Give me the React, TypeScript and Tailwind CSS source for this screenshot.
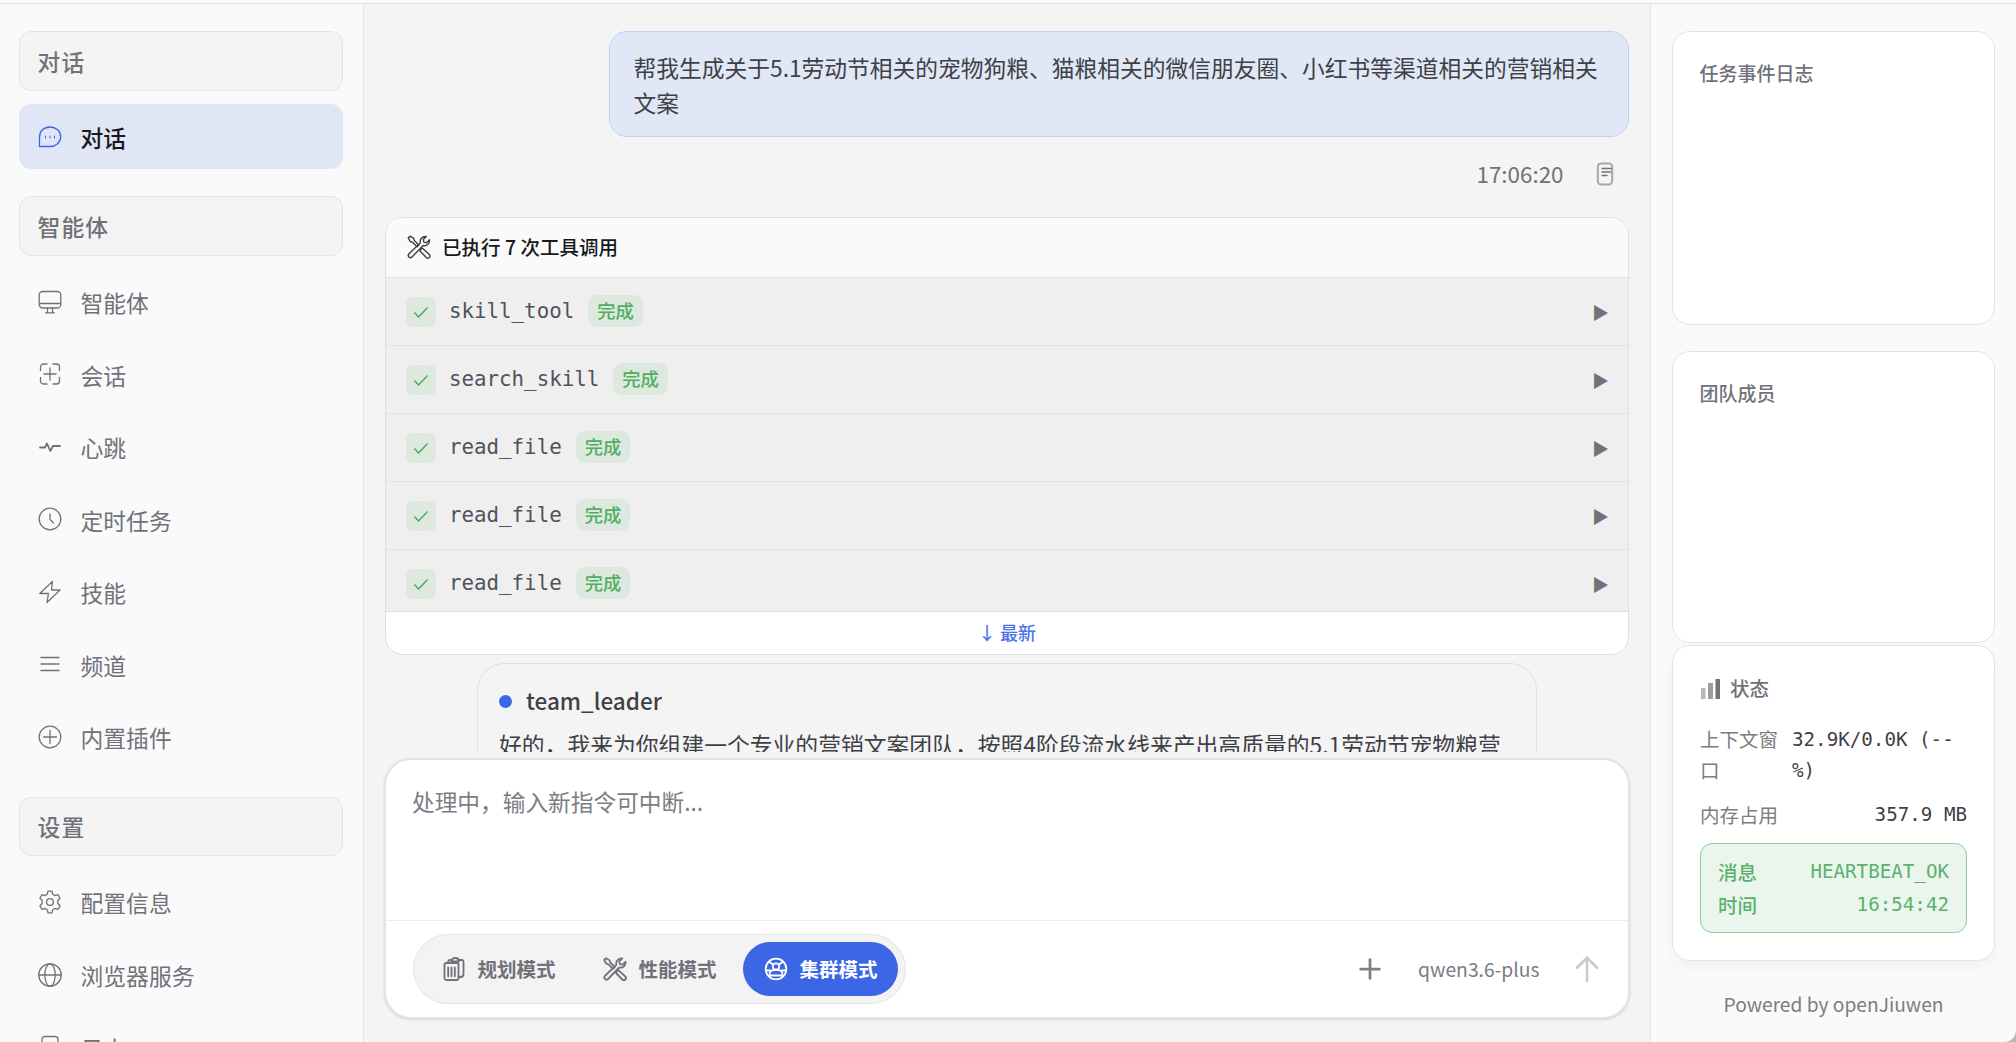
import type { ReactNode } from 'react';
import clsx from 'clsx';

type IconProps = { size?: number; width?: number; children: ReactNode; className?: string };

function Icon({ size = 24, width = 1.3, children, className }: IconProps) {
  return (
    <svg
      width={size}
      height={size}
      viewBox="0 0 24 24"
      fill="none"
      stroke="currentColor"
      strokeWidth={width}
      strokeLinecap="round"
      strokeLinejoin="round"
      className={clsx('shrink-0', className)}
    >
      {children}
    </svg>
  );
}

const icons: Record<string, ReactNode> = {
  chat: (
    <>
      <path d="M1.500 21.500V12C1.500 6 6 2 12 2s10.700 4.300 10.700 9.750S18 21.500 12 21.500z" />
      <path d="M7.500 11v2M12 11v2M16.500 11v2" strokeWidth={1} />
    </>
  ),
  agent: (
    <>
      <rect x="1.200" y="1.500" width="21.600" height="16.500" rx="3.500" />
      <path d="M1.500 13.500h21M9.500 18v4M14.500 18v4M7.500 22.800h9" />
    </>
  ),
  session: (
    <>
      <path d="M2.500 8.500V5a3 3 0 0 1 3-3H9M15 2h3.500a3 3 0 0 1 3 3v3.500M21.500 15.500V19a3 3 0 0 1-3 3H15M9 22H5.500a3 3 0 0 1-3-3v-3.500" />
      <path d="M12 6v12M6 12h12" />
    </>
  ),
  heart: <path d="M2 12.500h5L9 8.500l3.300 7.500 2.700-5h7" strokeWidth={1.8} />,
  clock: (
    <>
      <circle cx="12" cy="12" r="10.800" />
      <path d="M12 7v5.500l3.500 3.500" />
    </>
  ),
  bolt: <path d="M14.500 1.500 1.800 13.500h8.700L9 22.500l13-12.500h-8.500z" />,
  menu: <path d="M3 5.500h18M3 12h18M3 18.500h18" />,
  plugin: (
    <>
      <circle cx="12" cy="12" r="10.800" />
      <path d="M12 5.500v13M5.500 12h13" />
    </>
  ),
  gear: (
    <>
      <path d="M10 1.200h4l.8 3.100 2.200 1.300 3.100-.9 2 3.500-2.300 2.300v3l2.300 2.300-2 3.500-3.100-.9-2.200 1.300-.8 3.100h-4l-.8-3.100L7 18.400l-3.100.9-2-3.500 2.300-2.300v-3L1.900 8.200l2-3.500 3.100.9 2.200-1.300z" />
      <circle cx="12" cy="12" r="3.400" />
    </>
  ),
  globe: (
    <>
      <circle cx="12" cy="12" r="11.200" />
      <ellipse cx="12" cy="12" rx="5.200" ry="11.200" />
      <path d="M.8 12h22.400" />
    </>
  ),
  log: (
    <>
      <rect x="4" y="1.500" width="16" height="21" rx="3" />
      <path d="M8 8h8M8 12h8" />
    </>
  ),
  tools: (
    <>
      <path d="M3 1.200 1.200 3l2 3.500 2.300.8 4.500 4.500 1.800-1.800-4.500-4.500-.8-2.300z" />
      <path d="m14 14 1.500-.8 6.800 6.300a2.100 2.100 0 0 1-3 3L13 16z" />
      <path d="M16.200 10.500 5 22a2.200 2.200 0 0 1-3.200-3L13.400 7.800c-.8-3.200 1.600-6.800 5.800-6.300l-2.900 2.900.6 2.700 2.700.6 2.900-2.900c.6 4.200-3 6.500-6.300 5.700z" />
    </>
  ),
  plan: (
    <>
      <rect x="2.500" y="6" width="14" height="17" rx="1.800" />
      <path d="M6 6V5a2 2 0 0 1 2-2h2M16 3h3.500a2 2 0 0 1 2 2v12a3 3 0 0 1-3 3h-2" />
      <path d="M9.500 4.500C9.500 2.500 11 1 13.200 1S17 2.500 17 4.500z" />
      <path d="M6.200 10.500v8.800M9.500 10.500v8.800M12.800 10.500v8.800" />
    </>
  ),
  cluster: (
    <>
      <circle cx="12" cy="12" r="10.300" />
      <circle cx="12" cy="9.500" r="3.200" />
      <path d="M5.500 16.500c.8-2 2-3 3.800-3.500h5.400c1.800.5 3 1.500 3.800 3.500M2.500 13.500h5M16.500 13.500h5M5 18.500h14M6 5.500l3 2M18 5.500l-3 2" />
    </>
  ),
  copy: (
    <>
      <rect x="4.800" y="1.500" width="14.400" height="21" rx="3.500" strokeWidth={2} className="opacity-60" />
      <path d="M9 6.500h9.500M9 10h8.500M9 13.500h5" />
    </>
  ),
};

const groups = [
  { title: '对话', items: [{ icon: 'chat', label: '对话', active: true }] },
  {
    title: '智能体',
    items: [
      { icon: 'agent', label: '智能体' },
      { icon: 'session', label: '会话' },
      { icon: 'heart', label: '心跳' },
      { icon: 'clock', label: '定时任务' },
      { icon: 'bolt', label: '技能' },
      { icon: 'menu', label: '频道' },
      { icon: 'plugin', label: '内置插件' },
    ],
  },
  {
    title: '设置',
    items: [
      { icon: 'gear', label: '配置信息' },
      { icon: 'globe', label: '浏览器服务' },
      { icon: 'log', label: '日志' },
    ],
  },
];

const toolCalls = ['skill_tool', 'search_skill', 'read_file', 'read_file', 'read_file'];

const modes = [
  { icon: 'plan', label: '规划模式' },
  { icon: 'tools', label: '性能模式' },
  { icon: 'cluster', label: '集群模式', active: true },
];

function Sidebar() {
  return (
    <nav className="flex w-[364px] shrink-0 flex-col gap-[27px] overflow-hidden border-r border-[#e4e4e6] bg-[#fafafa] pt-[27px] pr-5 pl-[19px]">
      {groups.map((group) => (
        <div key={group.title} className="flex shrink-0 flex-col">
          <div className="mb-[13.500px] flex h-[59.500px] items-center rounded-xl border border-[#e4e4e6] bg-[#f4f4f4] pt-[2px] pl-[17.500px] text-[22.800px] font-medium tracking-[1.100px] text-[#71717a]">
            {group.title}
          </div>
          <div className="flex flex-col gap-[7.600px]">
            {group.items.map((item) => (
              <div
                key={item.label}
                className={clsx(
                  'flex h-[65px] items-center gap-[18.500px] rounded-xl pl-[19px] text-[22.800px]',
                  'active' in item ? 'bg-[#e0e6f6] text-[#18181b]' : 'text-[#71717a]'
                )}
              >
                <Icon className={'active' in item ? 'text-[#3b66e5]' : ''}>{icons[item.icon]}</Icon>
                <span className={clsx('pt-[3px]', 'active' in item && 'font-medium')}>{item.label}</span>
              </div>
            ))}
          </div>
        </div>
      ))}
    </nav>
  );
}

function ToolCalls() {
  return (
    <div className="mt-[26px] flex h-[438px] shrink-0 flex-col overflow-hidden rounded-[18px] border-[1.500px] border-[#e0e0e2] bg-white">
      <div className="flex h-[60px] shrink-0 items-center gap-[11px] border-b border-[#e4e4e5] bg-[#fafafa] pb-[2px] pl-[21px] text-[19.500px] font-medium text-[#18181b]">
        <Icon width={1.4} className="text-[#3f3f46]">{icons.tools}</Icon>
        <span>已执行 7 次工具调用</span>
      </div>
      <div className="h-[334px] shrink-0 overflow-hidden border-b border-[#e0e0e1] bg-[#efefef]">
        {toolCalls.map((name, i) => (
          <div key={i} className="flex h-[68px] items-center border-b border-[#e2e2e3] pr-[19px] pl-5">
            <span className="flex size-[30px] items-center justify-center rounded-md bg-[#dde8df] text-[#3fa650]">
              <svg width="16" height="16" viewBox="0 0 16 16" fill="none" stroke="currentColor" strokeWidth="1.2">
                <path d="m1.500 8.500 4 4.500 9-9.500" />
              </svg>
            </span>
            <span className="ml-[13px] font-['DejaVu_Sans_Mono',monospace] text-[20.800px] text-[#52525b]">{name}</span>
            <span className="mb-px ml-[14px] flex h-[31.500px] items-center rounded-[9px] bg-[#dde8df] px-[9px] text-[18.300px] font-medium text-[#4fae60]">
              完成
            </span>
            <span className="ml-auto text-[17px] text-[#71717a]">▶</span>
          </div>
        ))}
      </div>
      <div className="flex flex-1 items-center justify-center pb-px text-[18px] font-medium text-[#4b73e6]">↓ 最新</div>
    </div>
  );
}

function Composer() {
  return (
    <div className="mx-[20px] mb-[23px] flex h-[261px] shrink-0 flex-col rounded-[27px] border-[2.500px] border-[#e4e4e5] bg-white shadow-sm">
      <div className="flex-1 px-[26px] pt-[25px] text-[22.700px] text-[#7c7c84]">处理中，输入新指令可中断...</div>
      <div className="flex h-[97px] shrink-0 items-center border-t border-[#ececed] pr-[25.500px] pl-[26.500px]">
        <div className="flex h-[70px] items-center gap-[6px] rounded-full border border-[#e4e4e5] bg-[#f3f3f3] px-[7px]">
          {modes.map((mode) => (
            <div
              key={mode.label}
              className={clsx(
                'flex h-[54px] items-center gap-[11.500px] rounded-full pr-5 pl-[21.500px] text-[19.500px] font-bold',
                'active' in mode ? 'bg-[#3b66e5] text-white' : 'text-[#71717a]'
              )}
            >
              <Icon width={1.8}>{icons[mode.icon]}</Icon>
              {mode.label}
            </div>
          ))}
        </div>
        <Icon size={30} width={2.2} className="ml-auto text-[#7f7f87]">
          <path d="M12 4.500v15M4.500 12h15" />
        </Icon>
        <span className="ml-[33px] text-[19.300px] text-[#7c7c84]">qwen3.6-plus</span>
        <Icon size={30} width={2} className="ml-[32px] mr-px text-[#c9c9cb]">
          <path d="M12 21.500V3M4 11l8-8 8 8" />
        </Icon>
      </div>
    </div>
  );
}

function Chat() {
  return (
    <main className="flex min-w-0 flex-1 flex-col bg-[#f4f4f4]">
      <div className="flex h-[748px] shrink-0 flex-col overflow-hidden px-[21px] pt-[27px]">
        <div className="w-[1020px] shrink-0 self-end rounded-[18px] border-[1.500px] border-[#bfd2f3] bg-[#e0e7f5] pt-[18px] pr-6 pb-[16px] pl-[23.500px] text-[22.760px] leading-[35px] text-[#3f3f46]">
          帮我生成关于5.1劳动节相关的宠物狗粮、猫粮相关的微信朋友圈、小红书等渠道相关的营销相关文案
        </div>
        <div className="mt-5 flex h-[34px] shrink-0 items-center justify-end gap-[29px] pr-[12.500px] text-[22.400px] text-[#71717a]">
          <span>17:06:20</span>
          <Icon>{icons.copy}</Icon>
        </div>
        <ToolCalls />
        <div className="mx-auto mt-[8px] w-[1060px] shrink-0 rounded-t-[27px] border-[1.500px] border-b-0 border-[#e0e0e2] px-[21px] pt-[19px] text-[#3f3f46]">
          <div className="flex h-[36px] items-center gap-[14px] text-[22.500px] font-medium">
            <span className="size-[13px] rounded-full bg-[#3b66e5]" />
            team_leader
          </div>
          <p className="mt-[7px] text-[22.800px] leading-[38px] whitespace-nowrap">
            好的，我来为你组建一个专业的营销文案团队，按照4阶段流水线来产出高质量的5.1劳动节宠物粮营
          </p>
        </div>
      </div>
      <div className="h-[6px] shrink-0" />
      <Composer />
    </main>
  );
}

function StatusCard() {
  return (
    <section className="mt-[2px] h-[316px] shrink-0 rounded-[18px] border border-[#e4e4e5] bg-white px-[27px] pt-[26px] shadow-[0_6px_14px_rgba(0,0,0,0.04)]">
      <div className="flex h-[32px] items-center gap-[9px] text-[19.500px] font-medium text-[#71717a]">
        <svg width="21" height="21" viewBox="0 0 21 21" fill="currentColor">
          <rect x="1" y="10" width="4.500" height="11" opacity="0.500" />
          <rect x="8" y="5" width="5" height="16" opacity="0.700" />
          <rect x="15.500" y="1" width="4.500" height="20" />
        </svg>
        状态
      </div>
      <div className="mt-[19px] flex gap-[13px] text-[19.500px] leading-[31px] text-[#7c7c84]">
        <span className="w-[79px] shrink-0">上下文窗口</span>
        <span className="pt-px font-['DejaVu_Sans_Mono',monospace] text-[19.200px] text-[#3f3f46]">32.9K/0.0K (--<br />%)</span>
      </div>
      <div className="mt-[13px] flex justify-between text-[19.500px] leading-[31px] text-[#7c7c84]">
        <span>内存占用</span>
        <span className="font-['DejaVu_Sans_Mono',monospace] text-[19.200px] text-[#3f3f46]">357.9 MB</span>
      </div>
      <div className="mt-[13px] flex h-[90px] flex-col justify-center rounded-xl border-[1.500px] border-[#8fcb9b] bg-[#eaf5ee] px-[17px] text-[19.500px] leading-[33.500px] text-[#5bb26c]">
        <div className="flex justify-between">
          <span className="font-medium">消息</span>
          <span className="font-['DejaVu_Sans_Mono',monospace] text-[19.200px]">HEARTBEAT_OK</span>
        </div>
        <div className="flex justify-between">
          <span className="font-medium">时间</span>
          <span className="font-['DejaVu_Sans_Mono',monospace] text-[19.200px]">16:54:42</span>
        </div>
      </div>
    </section>
  );
}

function RightPanel() {
  return (
    <aside className="flex w-[366px] shrink-0 flex-col rounded-br-xl border-l border-[#e4e4e6] bg-[#fafafa] px-[21px] pt-[27px]">
      <section className="h-[294px] shrink-0 rounded-[18px] border border-[#e4e4e6] bg-white px-[26.500px] pt-[27px] text-[19px] font-medium text-[#71717a]">
        任务事件日志
      </section>
      <section className="mt-[26px] h-[292px] shrink-0 rounded-[18px] border border-[#e4e4e6] bg-white px-[26.500px] pt-[27px] text-[19px] font-medium text-[#71717a]">
        团队成员
      </section>
      <StatusCard />
      <div className="mt-[29px] text-center text-[19.200px] text-[#7c7c84]">Powered by openJiuwen</div>
    </aside>
  );
}

export default function App() {
  return (
    <div className="flex h-[1042px] w-[2016px] flex-col overflow-hidden bg-[#b8b8b8] font-['Noto_Sans_CJK_SC',sans-serif]">
      <div className="h-1 shrink-0 border-b border-[#e2e2e4] bg-[#fafafa]" />
      <div className="flex min-h-0 flex-1">
        <Sidebar />
        <Chat />
        <RightPanel />
      </div>
    </div>
  );
}
